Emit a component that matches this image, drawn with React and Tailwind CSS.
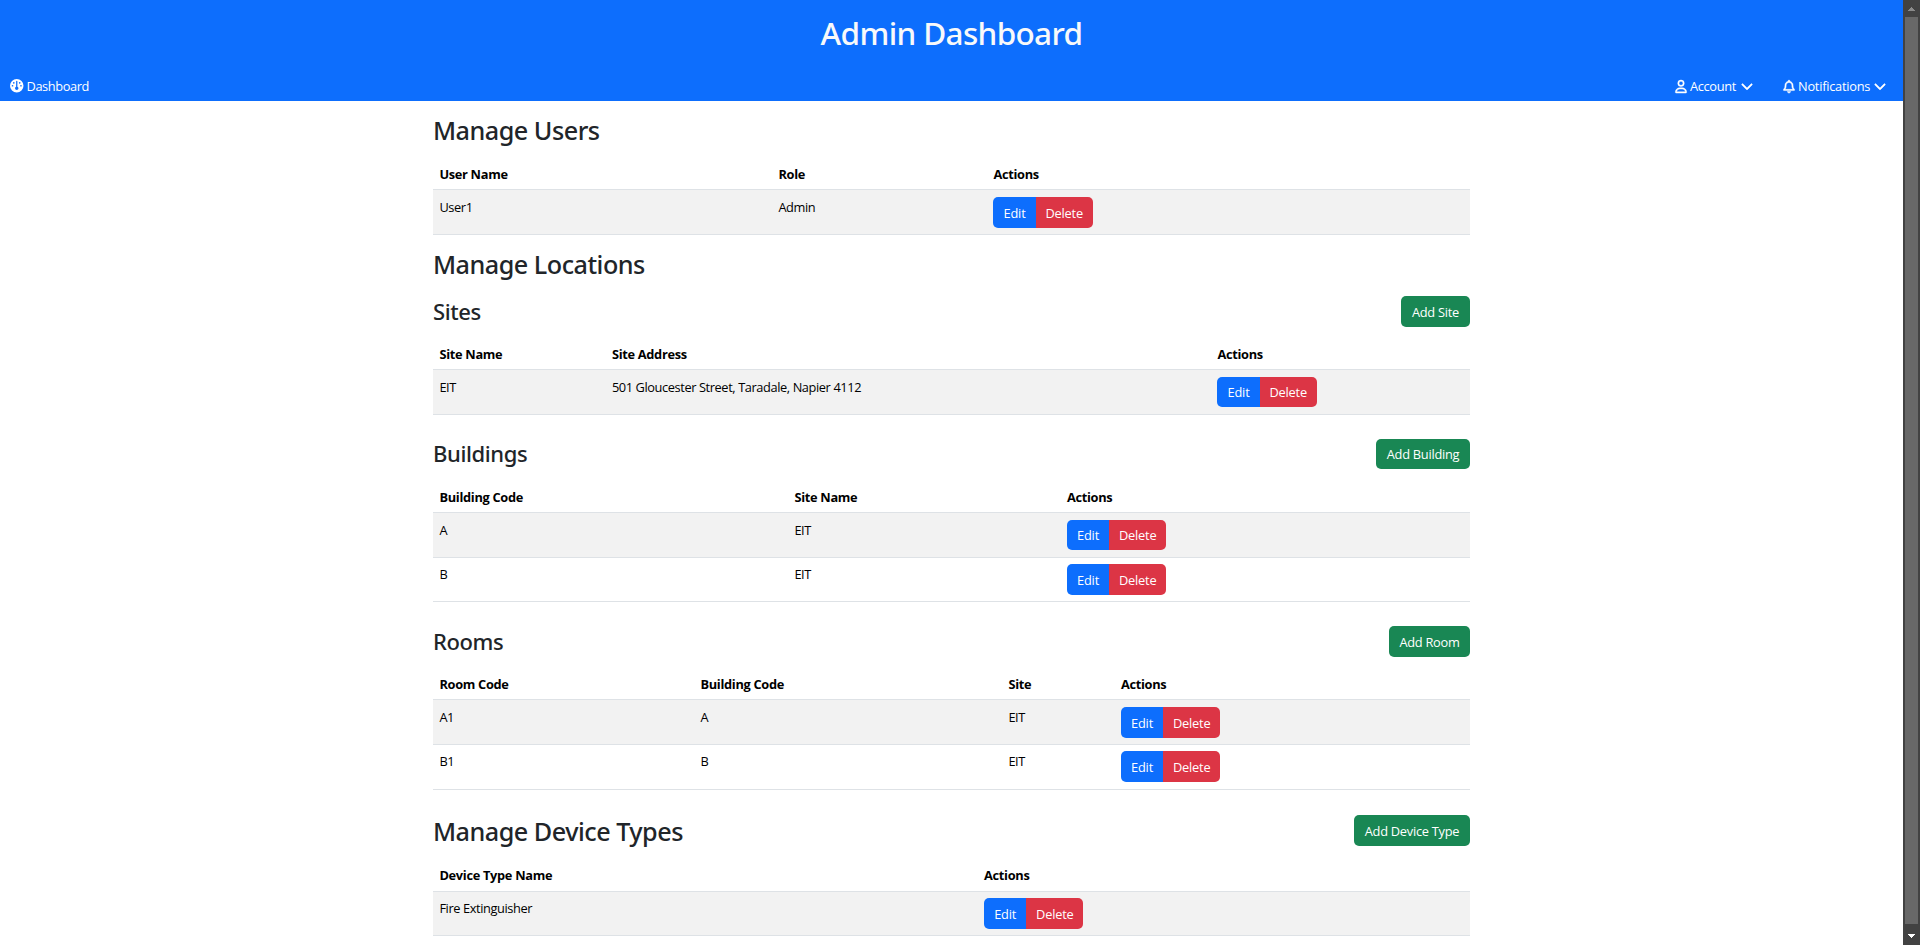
import React from 'react';
import { FaGauge, FaRegUser, FaRegBell, FaChevronDown } from 'react-icons/fa6';

const usersCols = 'grid-cols-[339px_215px_1fr]';
const sitesCols = 'grid-cols-[172.5px_605.5px_1fr]';
const buildingsCols = 'grid-cols-[355px_272.5px_1fr]';
const roomsCols = 'grid-cols-[261px_308px_112.5px_1fr]';
const devicesCols = 'grid-cols-[544.6px_1fr]';

function ActionButtons({ size }) {
  return (
    <div className={`flex text-[12.8px] tracking-[-0.2px] text-white ${size}`}>
      <button className="w-[42.3px] rounded-l-[5px] bg-[#0d6efd] text-center">Edit</button>
      <button className="w-[57px] rounded-r-[5px] bg-[#dc3545] text-center">Delete</button>
    </div>
  );
}

function Table({ cols, head, rows, headPad = 'pt-[5px]' }) {
  return (
    <div className="text-[12.8px] leading-5 text-black">
      <div className={`grid h-[31px] border-b border-[#dee2e6] font-bold tracking-[-0.3px] ${headPad} ${cols}`}>
        {head.map((h) => (
          <div key={h} className="px-[6.4px] whitespace-nowrap">{h}</div>
        ))}
      </div>
      {rows.map((row) => (
        <div key={row.cells[0]} className={`grid border-b border-[#dee2e6] tracking-[-0.4px] odd:bg-white even:bg-[#f2f2f2] ${cols} ${row.box}`}>
          {row.cells.map((cell, i) => (
            <div key={i} className="px-[6.4px] whitespace-nowrap">{cell}</div>
          ))}
          <div className="px-[6.4px]">
            <ActionButtons size={row.button} />
          </div>
        </div>
      ))}
    </div>
  );
}

function AddButton({ className, children }) {
  return (
    <button className={`rounded-[5px] bg-[#198754] text-center text-[12.8px] tracking-[-0.25px] whitespace-nowrap text-white ${className}`}>
      {children}
    </button>
  );
}

function H2({ className = 'leading-[31px]', children }) {
  return <h2 className={`h-[31px] text-[25.2px] font-medium tracking-[-0.5px] text-[#212529] ${className}`}>{children}</h2>;
}

function H3({ className = 'leading-[30px]', children }) {
  return <h3 className={`h-[30px] text-[22px] font-medium tracking-[-0.4px] text-[#212529] ${className}`}>{children}</h3>;
}

function Scrollbar() {
  return (
    <div className="flex w-[17px] shrink-0 flex-col items-center justify-between bg-[#424242]">
      <svg width="17" height="17" viewBox="0 0 17 17" fill="#8a8a8a" shapeRendering="crispEdges">
        <path d="M8 7h1v1h1v1h1v1h1v1H5v-1h1V9h1V8h1z" />
      </svg>
      <div className="w-[13px] grow bg-[#686868]" />
      <svg width="17" height="21" viewBox="0 0 17 21" fill="#ffffff" shapeRendering="crispEdges">
        <path d="M5 10h7v1h-1v1h-1v1H9v1H8v-1H7v-1H6v-1H5z" />
      </svg>
    </div>
  );
}

export default function App() {
  return (
    <div className="flex h-[945px] w-[1920px] overflow-hidden bg-white font-['Noto_Sans','Open_Sans',sans-serif]">
      <div className="flex w-[1903px] flex-col">
        <header className="h-[101px] bg-[#0d6efd] text-white">
          <h1 className="pt-[13px] text-center text-[31.5px] leading-10 font-medium tracking-[-0.65px] text-[#f8f9fa]">Admin Dashboard</h1>
          <nav className="mt-[23px] flex h-5 items-center justify-between pr-[17px] pl-2.5 font-['Open_Sans',sans-serif] text-[12.8px] leading-5">
            <div className="flex items-center gap-[3px]">
              <FaGauge className="size-[13.5px]" />
              <span className="tracking-[-0.4px]">Dashboard</span>
            </div>
            <div className="flex items-center gap-[30.5px]">
              <div className="flex items-center">
                <FaRegUser className="mr-[3px] h-[13px] w-3 overflow-visible stroke-white stroke-[18]" />
                <span className="w-[50.5px] tracking-[-0.35px]">Account</span>
                <FaChevronDown className="size-3 overflow-visible stroke-white stroke-[24]" />
              </div>
              <div className="flex items-center">
                <FaRegBell className="mr-[3px] h-[13px] w-3 overflow-visible stroke-white stroke-[18]" />
                <span className="w-[76px] tracking-[-0.25px]">Notifications</span>
                <FaChevronDown className="size-3 overflow-visible stroke-white stroke-[24]" />
              </div>
            </div>
          </nav>
        </header>

        <main className="mx-auto w-[1037px] pt-3.5">
          <section>
            <H2>Manage Users</H2>
            <div className="mt-[13px] font-['Open_Sans',sans-serif]">
              <Table
                cols={usersCols}
                head={['User Name', 'Role', 'Actions']}
                rows={[{ cells: ['User1', 'Admin'], box: 'h-[45px] pt-[7px]', button: 'h-[31px] leading-[33px]' }]}
              />
            </div>
          </section>

          <section className="mt-3.5">
            <H2>Manage Locations</H2>

            <div className="mt-4 flex h-[31px] items-start justify-between">
              <H3>Sites</H3>
              <AddButton className="h-[31px] w-[69px] font-['Open_Sans'] leading-[33px]">Add Site</AddButton>
            </div>
            <div className="mt-3 font-['Open_Sans',sans-serif]">
              <Table
                cols={sitesCols}
                head={['Site Name', 'Site Address', 'Actions']}
                rows={[{ cells: ['EIT', '501 Gloucester Street, Taradale, Napier 4112'], box: 'h-[45px] pt-[7px]', button: 'h-[30px] leading-[31px]' }]}
              />
            </div>

            <div className="mt-6 flex h-[30px] items-start justify-between">
              <H3 className="leading-[28px]">Buildings</H3>
              <AddButton className="h-[30px] w-[94px] font-['Open_Sans'] leading-[31px]">Add Building</AddButton>
            </div>
            <div className="mt-[13px] font-['Open_Sans',sans-serif]">
              <Table
                cols={buildingsCols}
                head={['Building Code', 'Site Name', 'Actions']}
                rows={[
                  { cells: ['A', 'EIT'], box: 'h-[45px] pt-[7px]', button: 'h-[30px] leading-[31px]' },
                  { cells: ['B', 'EIT'], box: 'h-[44px] pt-[6px]', button: 'h-[31px] leading-[33px]' },
                ]}
              />
            </div>

            <div className="mt-6 flex h-[31px] items-start justify-between">
              <H3>Rooms</H3>
              <AddButton className="h-[31px] w-[81px] font-['Open_Sans'] leading-[33px]">Add Room</AddButton>
            </div>
            <div className="mt-3 font-['Open_Sans',sans-serif]">
              <Table
                cols={roomsCols}
                head={['Room Code', 'Building Code', 'Site', 'Actions']}
                rows={[
                  { cells: ['A1', 'A', 'EIT'], box: 'h-[45px] pt-[7px]', button: 'h-[31px] leading-[33px]' },
                  { cells: ['B1', 'B', 'EIT'], box: 'h-[45px] pt-[6px]', button: 'h-[31px] leading-[33px]' },
                ]}
              />
            </div>
          </section>

          <section className="mt-[25px]">
            <div className="flex h-[31px] items-start justify-between">
              <H2 className="leading-[33px]">Manage Device Types</H2>
              <AddButton className="h-[31px] w-[116px] font-['Open_Sans'] leading-[33px]">Add Device Type</AddButton>
            </div>
            <div className="mt-[15px] font-['Open_Sans',sans-serif]">
              <Table
                cols={devicesCols}
                head={['Device Type Name', 'Actions']}
                headPad="pt-[4px]"
                rows={[{ cells: ['Fire Extinguisher'], box: 'h-[44px] pt-[6px]', button: 'h-[31px] leading-[33px]' }]}
              />
            </div>
          </section>
        </main>
      </div>
      <Scrollbar />
    </div>
  );
}
